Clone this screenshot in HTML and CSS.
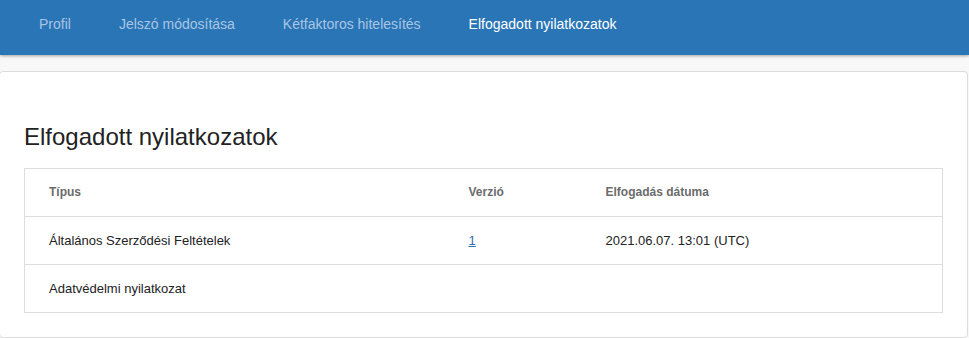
FILE: index.html
```html
<!DOCTYPE html>
<html lang="hu">
<head>
<meta charset="utf-8">
<title>Elfogadott nyilatkozatok</title>
<link rel="stylesheet" href="styles.css">
</head>
<body>
<nav class="navbar">
  <a class="nav-link" href="#">Profil</a>
  <a class="nav-link" href="#">Jelszó módosítása</a>
  <a class="nav-link" href="#">Kétfaktoros hitelesítés</a>
  <a class="nav-link active" href="#">Elfogadott nyilatkozatok</a>
</nav>
<main class="page">
  <section class="card">
    <h2 class="card-title">Elfogadott nyilatkozatok</h2>
    <table class="table">
      <colgroup>
        <col class="col-type">
        <col class="col-version">
        <col>
      </colgroup>
      <thead>
        <tr><th>Típus</th><th>Verzió</th><th>Elfogadás dátuma</th></tr>
      </thead>
      <tbody>
        <tr><td>Általános Szerződési Feltételek</td><td><a class="link" href="#">1</a></td><td>2021.06.07. 13:01 (UTC)</td></tr>
        <tr><td>Adatvédelmi nyilatkozat</td><td></td><td></td></tr>
      </tbody>
    </table>
  </section>
</main>
</body>
</html>
```
FILE: styles.css
```css
html, body {
  margin: 0;
  padding: 0;
  background: #f8f8f8;
  font-family: "Liberation Sans", Arial, sans-serif;
  color: #222;
}
.navbar {
  display: flex;
  height: 55px;
  padding-left: 15px;
  background: #2975b6;
  box-shadow: 0 1px 3px rgba(0, 0, 0, 0.35);
  position: relative;
}
.nav-link {
  display: block;
  padding: 14px 24px 0;
  line-height: 20px;
  font-size: 14px;
  color: #a9c5e3;
  text-decoration: none;
}
.nav-link.active {
  color: #ffffff;
}
.page {
  padding: 16px 1px 1px 0;
}
.card {
  margin-left: -1px;
  background: #fff;
  border: 1px solid #dcdcdc;
  border-radius: 4px;
  padding: 24px;
}
.card-title {
  margin: 26px 0 17px;
  font-size: 24px;
  line-height: 29px;
  font-weight: normal;
  color: #222;
}
.table {
  width: 100%;
  border-collapse: collapse;
  border: 1px solid #dddddd;
  font-size: 13px;
}
.col-type { width: 420px; }
.col-version { width: 137px; }
.table th,
.table td {
  text-align: left;
  padding: 14px 24px;
  line-height: 19px;
  border-bottom: 1px solid #dddddd;
}
.table th {
  font-size: 12px;
  font-weight: bold;
  color: #6b6b6b;
}
.table td {
  color: #222;
}
.link {
  color: #2a6db0;
  text-decoration: underline;
}
```
